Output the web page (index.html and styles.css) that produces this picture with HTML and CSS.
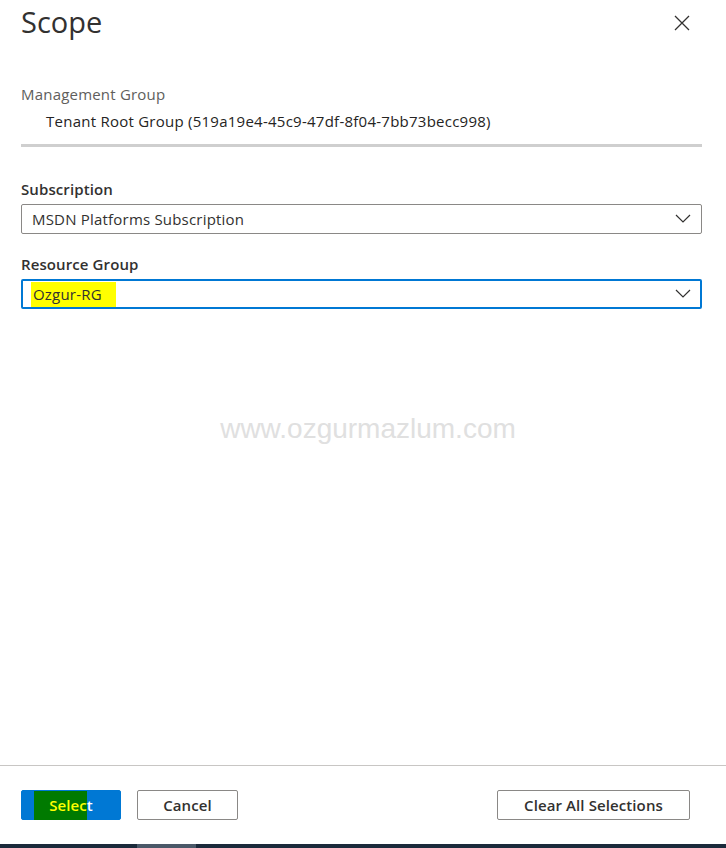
FILE: index.html
```html
<!DOCTYPE html>
<html lang="en">

<head>
  <meta charset="UTF-8">
  <meta name="viewport" content="width=device-width, initial-scale=1.0">
  <title>Scope</title>
  <link rel="stylesheet" href="styles.css">
</head>

<body>
  <div class="panel">
    <div class="panel-header">
      <h1>Scope</h1>
      <button class="close-btn" aria-label="Close">
        <svg width="16" height="16" viewBox="0 0 16 16">
          <path d="M1 1 L15 15 M15 1 L1 15" stroke="#323130" stroke-width="1.3" fill="none" />
        </svg>
      </button>
    </div>

    <div class="panel-body">
      <div class="mg-block">
        <div class="mg-label">Management Group</div>
        <div class="mg-value">Tenant Root Group (519a19e4-45c9-47df-8f04-7bb73becc998)</div>
      </div>

      <div class="field">
        <label class="field-label">Subscription</label>
        <div class="dropdown">
          <span class="dropdown-text">MSDN Platforms Subscription</span>
          <svg class="chevron" width="16" height="10" viewBox="0 0 16 10">
            <path d="M1 1 L8 8 L15 1" stroke="#323130" stroke-width="1.2" fill="none" />
          </svg>
        </div>
      </div>

      <div class="field">
        <label class="field-label">Resource Group</label>
        <div class="dropdown focused">
          <span class="dropdown-text"><span class="hl">Ozgur-RG</span></span>
          <svg class="chevron" width="16" height="10" viewBox="0 0 16 10">
            <path d="M1 1 L8 8 L15 1" stroke="#323130" stroke-width="1.2" fill="none" />
          </svg>
        </div>
      </div>

      <div class="watermark">www.ozgurmazlum.com</div>
    </div>

    <div class="panel-footer">
      <button class="btn btn-primary"><span class="marker">Selec</span>t</button>
      <button class="btn">Cancel</button>
      <button class="btn btn-clear">Clear All Selections</button>
    </div>
  </div>

  <div class="taskbar">
    <div class="taskbar-item"></div>
  </div>
</body>

</html>
```

FILE: styles.css
```css
:root {
  --text-color: #323130;
  --sub-text: #605e5c;
  --border-color: #8a8886;
  --divider: #c8c6c4;
  --primary: #0078d4;
}

body {
  margin: 0;
  padding: 0;
  font-family: 'Open Sans', 'Noto Sans', sans-serif;
  color: var(--text-color);
  background: #fff;
  width: 726px;
  height: 848px;
  overflow: hidden;
}

.panel {
  height: 844px;
  display: flex;
  flex-direction: column;
}

.panel-header {
  display: flex;
  justify-content: space-between;
  align-items: center;
  padding: 0 36px 0 21px;
  height: 44px;
}

.panel-header h1 {
  margin: 0;
  font-size: 29px;
  font-weight: 400;
  line-height: 40px;
  color: #323130;
}

.close-btn {
  background: none;
  border: none;
  padding: 0;
  cursor: pointer;
  display: flex;
  margin-top: 2px;
}

.panel-body {
  flex: 1;
  padding: 0 24px 0 21px;
}

.mg-block {
  margin-top: 36px;
  border-bottom: 3px solid #cfcfcf;
  padding-bottom: 10px;
}

.mg-label {
  font-size: 15px;
  color: var(--sub-text);
  line-height: 28px;
  letter-spacing: 0.2px;
}

.mg-value {
  font-size: 15px;
  padding-left: 25px;
  line-height: 26px;
  letter-spacing: 0.25px;
  color: #252423;
}

.field {
  margin-top: 32px;
}

.field + .field {
  margin-top: 20px;
}

.field-label {
  display: block;
  font-size: 15px;
  font-weight: 600;
  line-height: 20px;
  margin-bottom: 5px;
  letter-spacing: 0.1px;
}

.dropdown {
  height: 28px;
  border: 1px solid var(--border-color);
  border-radius: 2px;
  display: flex;
  align-items: center;
  justify-content: space-between;
  padding: 0 10px 0 10px;
}

.dropdown.focused {
  border: 2px solid var(--primary);
  height: 26px;
  padding: 0 9px 0 8px;
}

.dropdown-text {
  font-size: 15px;
  letter-spacing: 0.2px;
}

.hl {
  background: #ffff00;
  padding: 2px 14px 3px 2px;
}

.chevron {
  display: block;
}

.watermark {
  margin-top: 104px;
  text-align: center;
  font-family: 'Liberation Sans', Arial, sans-serif;
  font-size: 28px;
  color: #e0e0e0;
  padding-left: 13px;
}

.panel-footer {
  border-top: 1px solid var(--divider);
  height: 78px;
  display: flex;
  align-items: center;
  padding: 0 36px 0 21px;
  gap: 16px;
}

.btn {
  height: 30px;
  min-width: 101px;
  padding: 0 20px;
  font-family: 'Open Sans', 'Noto Sans', sans-serif;
  font-size: 15px;
  font-weight: 600;
  letter-spacing: 0.1px;
  color: var(--text-color);
  background: #fff;
  border: 1px solid var(--border-color);
  border-radius: 2px;
}

.btn-primary {
  width: 100px;
  min-width: 100px;
  background: var(--primary);
  border-color: var(--primary);
  color: #fff;
  padding: 0 15px 0 0;
}

.marker {
  background: #007a00;
  color: #ffff00;
  padding: 4px 0 5px 15px;
}

.btn-clear {
  margin-left: auto;
  width: 193px;
}

.taskbar {
  height: 4px;
  background: #1b2a3b;
  position: relative;
}

.taskbar-item {
  position: absolute;
  left: 137px;
  width: 59px;
  top: 0;
  bottom: 0;
  background: #4a5868;
}
```
